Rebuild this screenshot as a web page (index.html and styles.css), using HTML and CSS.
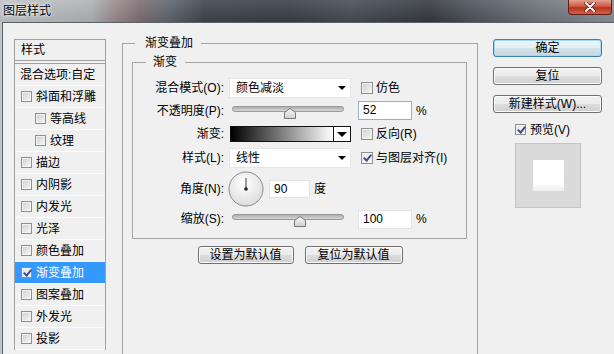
FILE: index.html
```html
<!DOCTYPE html>
<html lang="zh-CN">
<head>
    <meta charset="UTF-8">
    <meta name="viewport" content="width=device-width, initial-scale=1.0">
    <title>图层样式</title>
    <link rel="stylesheet" href="styles.css">
</head>
<body>
    <div class="title-bar">
        <span class="title">图层样式</span>
        <span class="close-btn">
            <svg width="12" height="10" viewBox="0 0 12 10">
                <path d="M2 1 L10 9 M10 1 L2 9" stroke="#5a1a12" stroke-width="3.4" stroke-linecap="round"/>
                <path d="M2 1 L10 9 M10 1 L2 9" stroke="#fff" stroke-width="2" stroke-linecap="round"/>
            </svg>
        </span>
    </div>

    <div class="frame">
        <div class="dialog">
            <div class="style-panel">
                <div class="panel-head">样式</div>
                <ul class="style-list">
                    <li class="blend">混合选项:自定</li>
                    <li><span class="cb"></span>斜面和浮雕</li>
                    <li class="sub"><span class="cb"></span>等高线</li>
                    <li class="sub"><span class="cb"></span>纹理</li>
                    <li><span class="cb"></span>描边</li>
                    <li><span class="cb"></span>内阴影</li>
                    <li><span class="cb"></span>内发光</li>
                    <li><span class="cb"></span>光泽</li>
                    <li><span class="cb"></span>颜色叠加</li>
                    <li class="active"><span class="cb checked"></span>渐变叠加</li>
                    <li><span class="cb"></span>图案叠加</li>
                    <li><span class="cb"></span>外发光</li>
                    <li><span class="cb"></span>投影</li>
                </ul>
            </div>

            <fieldset class="group outer">
                <legend>渐变叠加</legend>
                <fieldset class="group inner">
                    <legend>渐变</legend>
                    <div class="form-grid">
                        <span class="label">混合模式(O):</span>
                        <div class="select"><span>颜色减淡</span><i class="arrow"></i></div>
                        <div class="check"><span class="cb"></span>仿色</div>

                        <span class="label">不透明度(P):</span>
                        <svg class="slider" width="122" height="20" viewBox="0 0 122 20">
                            <defs>
                                <linearGradient id="track" x1="0" y1="0" x2="0" y2="1">
                                    <stop offset="0" stop-color="#a9a9a9"/>
                                    <stop offset="1" stop-color="#dcdcdc"/>
                                </linearGradient>
                                <linearGradient id="thumb" x1="0" y1="0" x2="0" y2="1">
                                    <stop offset="0" stop-color="#fafafa"/>
                                    <stop offset="1" stop-color="#cfcfcf"/>
                                </linearGradient>
                            </defs>
                            <rect x="3.5" y="5.5" width="111" height="5" rx="2.5" fill="url(#track)" stroke="#9a9a9a"/>
                            <path d="M55.5 17.5 V11.5 L61 7.5 L66.5 11.5 V17.5 Z" fill="url(#thumb)" stroke="#777" stroke-linejoin="round"/>
                        </svg>
                        <div class="value"><span class="num focus">52</span>%</div>

                        <span class="label">渐变:</span>
                        <div class="gradient">
                            <span class="ramp"></span>
                            <span class="drop"><i class="arrow big"></i></span>
                        </div>
                        <div class="check"><span class="cb"></span>反向(R)</div>

                        <span class="label">样式(L):</span>
                        <div class="select"><span>线性</span><i class="arrow"></i></div>
                        <div class="check"><span class="cb checked"></span>与图层对齐(I)</div>

                        <span class="label">角度(N):</span>
                        <div class="angle">
                            <svg class="dial" width="36" height="36" viewBox="0 0 36 36">
                                <defs>
                                    <radialGradient id="dialFill" cx="45%" cy="35%" r="70%">
                                        <stop offset="0" stop-color="#ffffff"/>
                                        <stop offset="1" stop-color="#dadada"/>
                                    </radialGradient>
                                </defs>
                                <circle cx="18" cy="18" r="17" fill="url(#dialFill)" stroke="#8a8a8a"/>
                                <line x1="18" y1="18" x2="18" y2="7" stroke="#3a3a3a" stroke-width="1"/>
                                <circle cx="18" cy="18" r="1.8" fill="#222"/>
                            </svg>
                            <span class="num small">90</span>
                            <span>度</span>
                        </div>
                        <span></span>

                        <span class="label">缩放(S):</span>
                        <svg class="slider" width="122" height="20" viewBox="0 0 122 20">
                            <rect x="3.5" y="5.5" width="111" height="5" rx="2.5" fill="url(#track)" stroke="#9a9a9a"/>
                            <path d="M65.5 17.5 V11.5 L71 7.5 L76.5 11.5 V17.5 Z" fill="url(#thumb)" stroke="#777" stroke-linejoin="round"/>
                        </svg>
                        <div class="value"><span class="num">100</span>%</div>
                    </div>
                </fieldset>

                <div class="defaults">
                    <button class="btn">设置为默认值</button>
                    <button class="btn">复位为默认值</button>
                </div>
            </fieldset>

            <div class="side">
                <button class="btn primary">确定</button>
                <button class="btn">复位</button>
                <button class="btn">新建样式(W)...</button>
                <div class="preview-check"><span class="cb checked"></span>预览(V)</div>
                <div class="preview-box"><span class="swatch"></span></div>
            </div>
        </div>
    </div>
</body>
</html>
```

FILE: styles.css
```css
* {
    box-sizing: border-box;
}
body {
    margin: 0;
    width: 614px;
    height: 354px;
    overflow: hidden;
    font-family: "Liberation Sans", "Noto Sans CJK SC", sans-serif;
    font-size: 12px;
    line-height: 14px;
    color: #000;
    background: #c3c6c9;
}

/* 标题栏 */
.title-bar {
    display: flex;
    align-items: flex-start;
    height: 22px;
    background:
        linear-gradient(180deg, rgba(255,255,255,0.12), rgba(0,0,0,0.06)),
        linear-gradient(90deg, #c0c3c6 0, #aeb1b4 90px, #958488 118px, #7b6c71 140px, #5d646c 168px, #3b424a 205px, #363d45 290px, #444b53 350px, #33383e 430px, #50565d 480px, #6c7278 540px, #878d93 614px);
}
.title {
    padding: 4px 0 0 3px;
    text-shadow: 0 0 4px #fff, 0 0 2px #fff;
}
.close-btn {
    display: flex;
    align-items: center;
    justify-content: center;
    width: 44px;
    height: 15px;
    margin-left: auto;
    margin-right: 2px;
    border: 1px solid #5c2018;
    border-top: none;
    border-radius: 0 0 4px 4px;
    background: linear-gradient(180deg, #e4a08f 0%, #cf5a45 45%, #b8321e 55%, #d2624a 100%);
}

.frame {
    display: flex;
    height: 332px;
    padding-left: 2px;
}
.dialog {
    flex: 1;
    display: flex;
    align-items: flex-start;
    background: #f0f0f0;
    border-top: 1px solid #5d6268;
    border-left: 1px solid #5d6268;
}

/* 左侧样式列表 */
.style-panel {
    width: 92px;
    margin: 16px 0 0 11px;
    border: 1px solid #a0a0a0;
    border-bottom: none;
}
.panel-head {
    height: 21px;
    line-height: 20px;
    padding-left: 6px;
    border-bottom: 1px solid #a0a0a0;
}
.style-list {
    list-style: none;
    margin: 2px 0 0;
    padding: 0;
    border-top: 1px solid #a0a0a0;
}
.style-list li {
    display: flex;
    align-items: center;
    height: 22px;
    padding-left: 6px;
    border-bottom: 1px solid #fcfcfc;
    white-space: nowrap;
    overflow: hidden;
}
.style-list li.blend {
    padding-left: 5px;
}
.style-list li.sub {
    padding-left: 20px;
}
.style-list li.active {
    background: #3399ff;
    color: #fff;
}
.style-list .cb {
    margin-right: 4px;
}

/* 复选框 */
.cb {
    position: relative;
    flex: none;
    width: 11px;
    height: 11px;
    border: 1px solid #8e8f8f;
    background: linear-gradient(135deg, #cdcecf, #f7f7f7);
    box-shadow: inset 0 0 0 1px #f3f3f3;
}
.cb.checked {
    background: linear-gradient(135deg, #e4e4e4, #fdfdfd);
}
.cb.checked::after {
    content: "";
    position: absolute;
    left: 3px;
    top: 0;
    width: 3px;
    height: 6px;
    border: solid #3c4d8a;
    border-width: 0 2px 2px 0;
    transform: rotate(40deg);
}

/* 分组框 */
fieldset.group {
    margin: 0;
    padding: 0;
    min-width: 0;
    border: 1px solid #a5a5a5;
}
.group > legend {
    padding: 0 8px 0 10px;
    line-height: 14px;
}
.outer {
    width: 356px;
    height: 330px;
    margin: 13px 0 0 16px !important;
}
.outer > legend {
    margin-left: 12px;
}
.inner {
    width: 335px;
    margin: 5px 0 0 9px !important;
    padding: 7px 0 8px !important;
}
.inner > legend {
    margin-left: 13px;
    padding: 0 8px 0 7px;
}

.form-grid {
    display: grid;
    grid-template-columns: 92px 122px 1fr;
    grid-template-rows: 23px 23px 24px 24px 38px 22px;
    column-gap: 4px;
    align-items: center;
}
.label {
    text-align: right;
    padding-right: 1px;
    white-space: nowrap;
}
.select {
    display: flex;
    align-items: center;
    justify-content: space-between;
    height: 20px;
    padding: 0 4px 0 6px;
    background: #fff;
    border: 1px solid #e6e6e6;
}
.arrow {
    width: 0;
    height: 0;
    border-left: 4px solid transparent;
    border-right: 4px solid transparent;
    border-top: 4px solid #000;
}
.arrow.big {
    border-left-width: 5px;
    border-right-width: 5px;
    border-top-width: 5px;
}
.check {
    display: flex;
    align-items: center;
    padding-left: 6px;
    white-space: nowrap;
}
.check .cb {
    width: 12px;
    height: 12px;
    margin-right: 3px;
}
.value {
    display: flex;
    align-items: center;
    padding-left: 3px;
}
.num {
    width: 54px;
    height: 19px;
    padding: 0 4px;
    margin-right: 4px;
    line-height: 17px;
    background: #fff;
    border: 1px solid #e2e3ea;
}
.num.focus {
    border-color: #8fb1d3;
}
.num.small {
    width: 41px;
    height: 18px;
    line-height: 16px;
    margin: 0 4px 0 5px;
}
.gradient {
    display: flex;
    width: 121px;
    height: 16px;
    margin-left: 1px;
    border: 1px solid #111;
}
.gradient .ramp {
    flex: 1;
    background: linear-gradient(90deg, #000, #fff);
}
.gradient .drop {
    display: flex;
    align-items: center;
    justify-content: center;
    width: 17px;
    background: #fff;
    border-left: 1px solid #111;
}
.angle {
    display: flex;
    align-items: center;
}
.dial {
    margin-left: -1px;
}

/* 按钮 */
.btn {
    display: block;
    width: 100%;
    height: 18px;
    margin: 0 0 10px;
    padding: 0;
    font: inherit;
    line-height: 16px;
    color: #000;
    border: 1px solid #707070;
    border-radius: 3px;
    background: linear-gradient(180deg, #f2f2f2 0%, #ebebeb 50%, #dddddd 51%, #cfcfcf 100%);
    box-shadow: inset 0 0 0 1px #fbfbfb;
}
.btn.primary {
    border-color: #3c7fb1;
    box-shadow: inset 0 0 0 1px #a6d6f5;
    background: linear-gradient(180deg, #eef5fa 0%, #e3edf4 50%, #d3e1ea 51%, #c6d6e2 100%);
}
.defaults {
    display: flex;
    justify-content: center;
    gap: 11px;
    margin-top: 7px;
}
.defaults .btn {
    width: 96px;
    margin: 0;
}
.defaults .btn + .btn {
    width: 98px;
}

/* 右侧 */
.side {
    width: 109px;
    margin: 16px 0 0 15px;
}
.preview-check {
    display: flex;
    align-items: center;
    height: 13px;
    margin-left: 22px;
}
.preview-check .cb {
    margin-right: 4px;
}
.preview-box {
    display: flex;
    align-items: center;
    justify-content: center;
    width: 66px;
    height: 65px;
    margin: 7px 0 0 22px;
    background: #dadada;
    border: 1px solid #c4c4c4;
}
.preview-box .swatch {
    width: 31px;
    height: 31px;
    background: linear-gradient(#fff 75%, #ececec);
}
```
